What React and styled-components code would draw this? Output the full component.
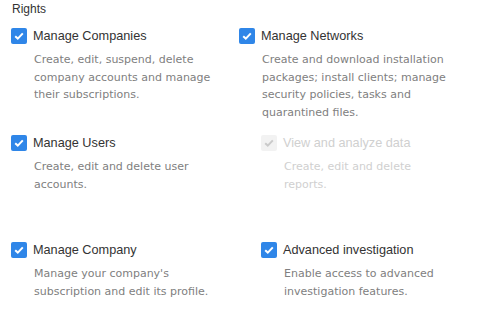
import React from 'react';
import styled, { createGlobalStyle } from 'styled-components';

const GlobalStyle = createGlobalStyle`
  body {
    margin: 0;
    background: #fff;
    font-family: "Liberation Sans", Arial, sans-serif;
  }
`;

const Panel = styled.div`
  width: 480px;
  height: 323px;
  padding: 2px 0 0 11px;
  box-sizing: border-box;
  overflow: hidden;
`;

const Title = styled.div`
  font-size: 12px;
  color: #333;
  line-height: 15px;
  margin-left: 1px;
  margin-bottom: 11px;
`;

const Grid = styled.div`
  display: grid;
  grid-template-columns: 228px 228px;
  grid-auto-rows: 107px;
`;

const Item = styled.div`
  display: flex;
  flex-direction: column;
  padding-left: ${(p) => (p.$nested ? '22px' : '0')};
`;

const Head = styled.div`
  display: flex;
  align-items: center;
  gap: 6px;
  height: 16px;
`;

const Box = styled.span`
  width: 16px;
  height: 16px;
  border-radius: 2px;
  background: ${(p) => (p.$disabled ? '#f2f2f2' : '#2f86e8')};
  display: flex;
  align-items: center;
  justify-content: center;
  flex-shrink: 0;
`;

const Label = styled.span`
  font-size: 12.7px;
  color: ${(p) => (p.$disabled ? '#d0d0d0' : '#333')};
`;

const Desc = styled.div`
  margin: 7px 0 0 23px;
  font-family: "DejaVu Sans", Verdana, sans-serif;
  font-size: 11px;
  line-height: 17.6px;
  color: ${(p) => (p.$disabled ? '#d0d0d0' : '#808080')};
  max-width: ${(p) => (p.$nested ? '164px' : '188px')};
`;

const Check = ({ disabled }) => (
  <Box $disabled={disabled}>
    <svg width="10" height="8" viewBox="0 0 10 8">
      <path
        d="M1.2 4.2 L3.8 6.6 L8.8 1.4"
        fill="none"
        stroke={disabled ? '#cacaca' : '#fff'}
        strokeWidth="2"
      />
    </svg>
  </Box>
);

const rights = [
  {
    label: 'Manage Companies',
    desc: 'Create, edit, suspend, delete company accounts and manage their subscriptions.',
  },
  {
    label: 'Manage Networks',
    desc: 'Create and download installation packages; install clients; manage security policies, tasks and quarantined files.',
  },
  { label: 'Manage Users', desc: 'Create, edit and delete user accounts.' },
  {
    label: 'View and analyze data',
    desc: 'Create, edit and delete reports.',
    disabled: true,
    nested: true,
  },
  { label: 'Manage Company', desc: "Manage your company's subscription and edit its profile." },
  {
    label: 'Advanced investigation',
    desc: 'Enable access to advanced investigation features.',
    nested: true,
  },
];

const App = () => (
  <>
    <GlobalStyle />
    <Panel>
      <Title>Rights</Title>
      <Grid>
        {rights.map((r) => (
          <Item key={r.label} $nested={r.nested}>
            <Head>
              <Check disabled={r.disabled} />
              <Label $disabled={r.disabled}>{r.label}</Label>
            </Head>
            <Desc $disabled={r.disabled} $nested={r.nested}>
              {r.desc}
            </Desc>
          </Item>
        ))}
      </Grid>
    </Panel>
  </>
);

export default App;
